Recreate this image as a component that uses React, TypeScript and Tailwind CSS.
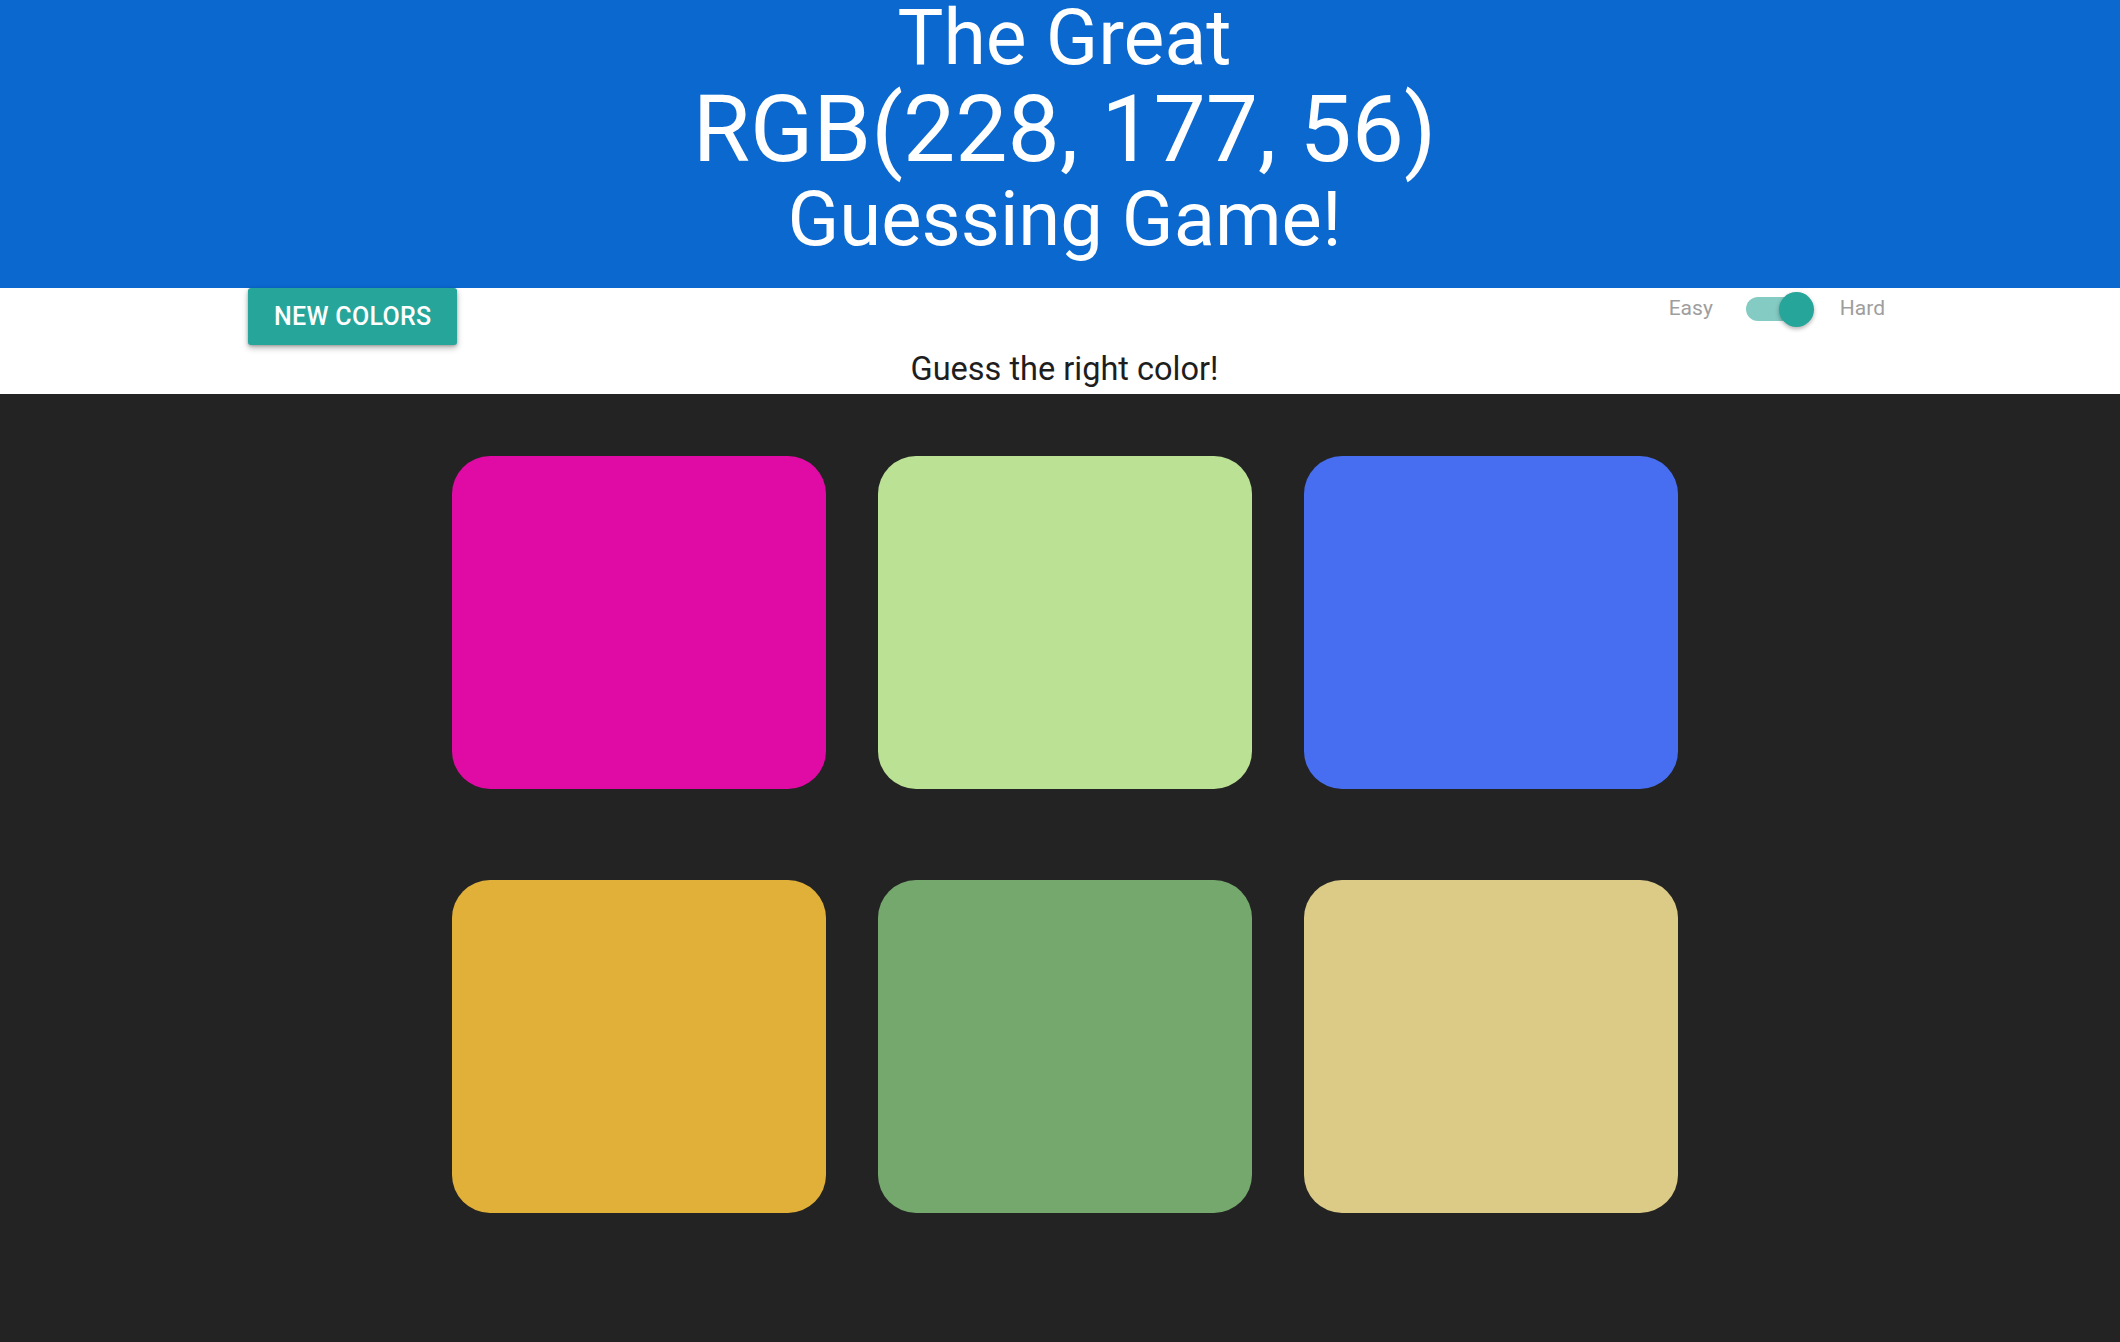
import React from "react";

const colors = ["#df0ba4", "#bbe294", "#476ef0", "#e1b038", "#75a86d", "#dbcb86"];

export default function App() {
  return (
    <div className="min-h-[1342px] w-full bg-[#232323] font-['Roboto',sans-serif]">
      <header className="h-[288px] bg-[#0b68cf] text-white flex flex-col items-center pl-[9px]">
        <div className="text-[77px] leading-[76px]">The Great</div>
        <div className="text-[93px] leading-[108px]">RGB(228, 177, 56)</div>
        <div className="text-[76px] leading-[70px]">Guessing Game!</div>
      </header>
      <section className="h-[106px] bg-white relative">
        <div className="flex items-start justify-between pl-[248px] pr-[235px]">
          <button className="h-[57px] px-[26px] bg-[#26a69a] text-white text-[25px] font-medium tracking-[0.3px] rounded-[3px] shadow-[0_3px_6px_rgba(0,0,0,0.28),0_1px_3px_rgba(0,0,0,0.2)]">
            NEW COLORS
          </button>
          <div className="flex items-center mt-[1px] h-[40px] text-[21px] text-[#9e9e9e]">
            <span>Easy</span>
            <div className="relative ml-[33px] mr-[26px] w-[68px] h-[36px] flex items-center">
              <div className="w-[64px] h-[24px] rounded-full bg-[#84cbc4]" />
              <div className="absolute right-0 top-[1px] w-[35px] h-[35px] rounded-full bg-[#26a69a] shadow-[0_2px_4px_rgba(0,0,0,0.3)]" />
            </div>
            <span>Hard</span>
          </div>
        </div>
        <div className="text-center text-[32.5px] leading-[40px] text-[#1e1e1e] mt-[4px] pl-[9px]">
          Guess the right color!
        </div>
      </section>
      <main className="pt-[62px] pb-[129px] flex justify-center pl-[9px]">
        <div className="grid grid-cols-[374px_374px_374px] gap-x-[52px] gap-y-[91px]">
          {colors.map((c, i) => (
            <div key={i} className="h-[333px] w-[374px] rounded-[38px]" style={{ backgroundColor: c }} />
          ))}
        </div>
      </main>
    </div>
  );
}
